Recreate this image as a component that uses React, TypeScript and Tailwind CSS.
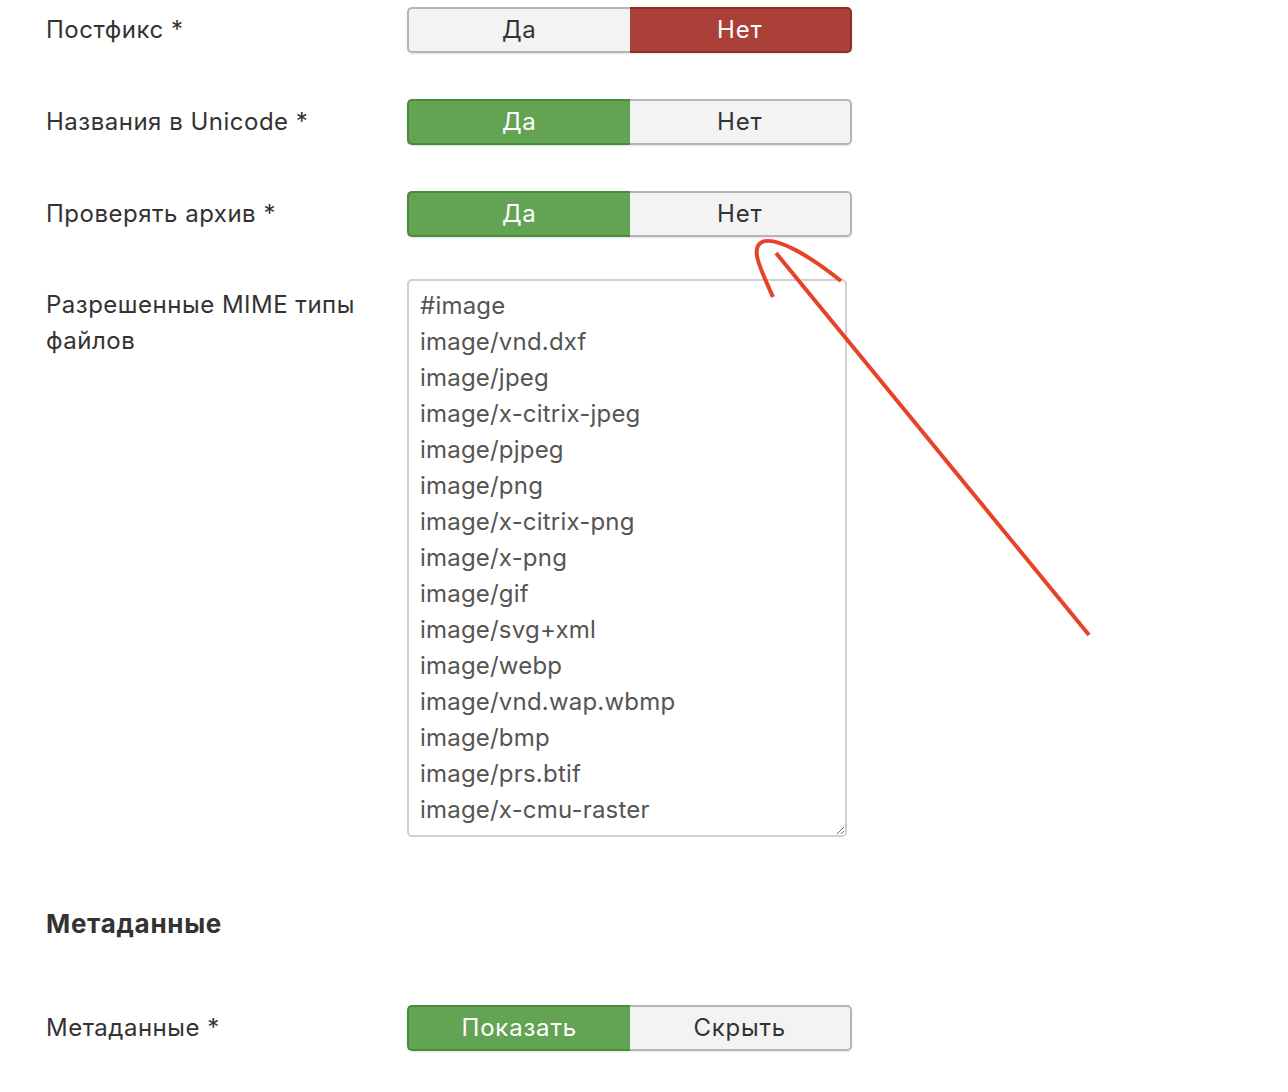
import React from "react";

const FONT = "font-['Inter','Liberation_Sans','Helvetica','Arial',sans-serif]";

const mimeTypes = [
  "#image",
  "image/vnd.dxf",
  "image/jpeg",
  "image/x-citrix-jpeg",
  "image/pjpeg",
  "image/png",
  "image/x-citrix-png",
  "image/x-png",
  "image/gif",
  "image/svg+xml",
  "image/webp",
  "image/vnd.wap.wbmp",
  "image/bmp",
  "image/prs.btif",
  "image/x-cmu-raster",
  "image/x-icon",
  "image/tiff",
];

type Tone = "red" | "green";

function Toggle({
  left,
  right,
  active,
  tone,
}: {
  left: string;
  right: string;
  active: "left" | "right";
  tone: Tone;
}) {
  const on =
    tone === "red"
      ? "bg-[#ab4038] border-[#8e2f29] text-white"
      : "bg-[#62a354] border-[#4b8a3e] text-white";
  const off = "bg-[#f3f3f3] border-[#b5b5b5] text-[#333]";

  return (
    <div className="flex w-[445px] h-[46px] rounded-[5px] shadow-[0_1px_2px_rgba(0,0,0,0.12)] tracking-[0.8px]">
      <div
        className={`flex-1 flex items-center justify-center border-2 rounded-l-[5px] border-r-0 text-[24px] ${
          active === "left" ? on : off
        }`}
      >
        {left}
      </div>
      <div
        className={`flex-1 flex items-center justify-center border-2 border-l-0 rounded-r-[5px] text-[24px] ${
          active === "right" ? on : off
        }`}
      >
        {right}
      </div>
    </div>
  );
}

function Row({ label, children }: { label: string; children: React.ReactNode }) {
  return (
    <div className="flex items-center">
      <div className="w-[361px] text-[24px] leading-[36px] tracking-[0.5px] text-[#333]">{label}</div>
      {children}
    </div>
  );
}

export default function App() {
  return (
    <div className={`relative w-full h-[1092px] bg-white overflow-hidden ${FONT}`}>
      <div className="pl-[46px] pt-[7px]">
        <Row label="Постфикс *">
          <Toggle left="Да" right="Нет" active="right" tone="red" />
        </Row>

        <div className="mt-[46px]">
          <Row label="Названия в Unicode *">
            <Toggle left="Да" right="Нет" active="left" tone="green" />
          </Row>
        </div>

        <div className="mt-[46px]">
          <Row label="Проверять архив *">
            <Toggle left="Да" right="Нет" active="left" tone="green" />
          </Row>
        </div>

        {/* MIME типы */}
        <div className="flex mt-[42px]">
          <div className="w-[361px] pt-[8px] text-[24px] leading-[36px] tracking-[0.5px] text-[#333]">
            Разрешенные MIME типы
            <br />
            файлов
          </div>
          <textarea
            readOnly
            defaultValue={mimeTypes.join("\n")}
            className={`w-[440px] h-[558px] border-2 border-[#cfcfcf] rounded-[5px] pl-[11px] pt-[7px] text-[24px] leading-[36px] tracking-[0.2px] text-[#555] overflow-hidden resize outline-none ${FONT}`}
          />
        </div>

        <h2 className="mt-[69px] text-[26px] font-bold text-[#333] leading-[36px] tracking-[0.7px]">Метаданные</h2>

        <div className="mt-[63px]">
          <Row label="Метаданные *">
            <Toggle left="Показать" right="Скрыть" active="left" tone="green" />
          </Row>
        </div>
      </div>

      {/* стрелка-пометка */}
      <svg
        className="absolute left-0 top-0 pointer-events-none"
        width="1288"
        height="1092"
        viewBox="0 0 1288 1092"
        fill="none"
      >
        <path
          d="M773 297 C 760 268, 750 248, 762 242 C 776 236, 810 256, 841 281"
          stroke="#e8432a"
          strokeWidth="4"
        />
        <path d="M776 253 L1089 635" stroke="#e8432a" strokeWidth="4" />
      </svg>
    </div>
  );
}
